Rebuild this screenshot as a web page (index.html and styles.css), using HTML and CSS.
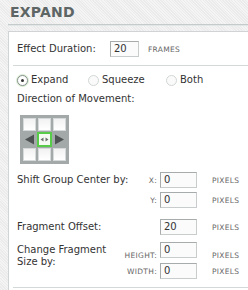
FILE: index.html
```html
<!DOCTYPE html>
<html>
<head>
<meta charset="utf-8">
<link rel="stylesheet" href="styles.css">
</head>
<body>
<div class="page">
  <h1 class="title">EXPAND</h1>
  <div class="panel">
    <div class="row duration">
      <span class="label w-dur">Effect Duration:</span>
      <span class="field f-short">20</span>
      <span class="unit">FRAMES</span>
    </div>
    <div class="sep"></div>
    <div class="radios">
      <label class="radio r-expand"><span class="dot checked"></span>Expand</label>
      <label class="radio r-squeeze"><span class="dot"></span>Squeeze</label>
      <label class="radio"><span class="dot"></span>Both</label>
    </div>
    <div class="label dir-label">Direction of Movement:</div>
    <div class="dir-grid">
      <span class="cell"></span><span class="cell"></span><span class="cell"></span>
      <span class="cell arrow"><svg width="13" height="13" viewBox="0 0 13 13"><path d="M2 6.5 L11 1.5 L11 11.5 Z" fill="#4e5252"/></svg></span>
      <span class="cell center"><svg width="11" height="11" viewBox="0 0 11 11"><path d="M1.5 5.5 L4.5 3.5 L4.5 7.5 Z M9.5 5.5 L6.5 3.5 L6.5 7.5 Z" fill="#6a6e6e"/></svg></span>
      <span class="cell arrow"><svg width="13" height="13" viewBox="0 0 13 13"><path d="M11 6.5 L2 1.5 L2 11.5 Z" fill="#4e5252"/></svg></span>
      <span class="cell"></span><span class="cell"></span><span class="cell"></span>
    </div>
    <div class="params">
      <div class="prow r-x">
        <span class="label">Shift Group Center by:</span>
        <span class="sub">X:</span>
        <span class="field f-long">0</span>
        <span class="unit">PIXELS</span>
      </div>
      <div class="prow r-y">
        <span class="label"></span>
        <span class="sub">Y:</span>
        <span class="field f-long">0</span>
        <span class="unit">PIXELS</span>
      </div>
      <div class="prow r-frag">
        <span class="label">Fragment Offset:</span>
        <span class="sub"></span>
        <span class="field f-long">20</span>
        <span class="unit">PIXELS</span>
      </div>
      <div class="prow r-h">
        <span class="label two-line">Change Fragment<br>Size by:</span>
        <span class="sub">HEIGHT:</span>
        <span class="field f-long">0</span>
        <span class="unit">PIXELS</span>
      </div>
      <div class="prow r-w">
        <span class="label"></span>
        <span class="sub">WIDTH:</span>
        <span class="field f-long">0</span>
        <span class="unit">PIXELS</span>
      </div>
    </div>
    <div class="sep bottom"></div>
  </div>
</div>
</body>
</html>
```
FILE: styles.css
```css
html, body {
  margin: 0;
  padding: 0;
}
body {
  width: 248px;
  height: 290px;
  overflow: hidden;
  background-color: #f0f0f0;
  background-image: repeating-linear-gradient(45deg, #ebebeb 0 1px, #f4f4f4 1px 2px);
  font-family: "DejaVu Sans", Verdana, sans-serif;
  color: #333;
}
.page {
  padding-left: 8px;
}
.title {
  margin: 0;
  padding: 5px 0 0 2px;
  height: 19px;
  font-size: 14px;
  font-weight: bold;
  color: #5d6565;
  letter-spacing: 0.2px;
  line-height: 15px;
  border-bottom: 1px solid #c5cbcb;
  box-shadow: 0 1px 0 #e2e6e6;
}
.panel {
  margin-top: 6px;
  background: #fff;
  border-top: 1px solid #d0d4d4;
  border-left: 1px solid #d0d4d4;
  padding: 9px 0 4px 8px;
}
.label {
  font-size: 10px;
  line-height: 12px;
  color: #333;
  white-space: nowrap;
}
.row {
  display: flex;
  align-items: center;
}
.w-dur {
  width: 93px;
}
.field {
  box-sizing: border-box;
  height: 16px;
  border: 1px solid #a7abab;
  border-right-color: #c9cccc;
  border-bottom-color: #c9cccc;
  background: #fbfbfb;
  font-size: 10px;
  line-height: 14px;
  padding-left: 3px;
  color: #333;
}
.f-short {
  width: 29px;
}
.f-long {
  width: 37px;
}
.unit {
  font-size: 7.5px;
  color: #666;
  letter-spacing: 0.3px;
}
.duration .unit {
  margin-left: 9px;
}
.sep {
  height: 1px;
  background: #d3d8d8;
  margin: 8px 0 0 -4px;
}
.radios {
  display: flex;
  align-items: center;
  margin-top: 8px;
  font-size: 10px;
  line-height: 12px;
  color: #333;
}
.radio {
  display: flex;
  align-items: center;
}
.r-expand { width: 71px; }
.r-squeeze { width: 78px; }
.dot {
  box-sizing: border-box;
  width: 11px;
  height: 11px;
  border-radius: 50%;
  border: 1px solid #d3d6d6;
  background: #fafafa;
  margin-right: 3px;
  position: relative;
}
.dot.checked {
  border-color: #8a9090;
  box-shadow: 0 0 0 1px #d8ecd2;
  background: #fff;
}
.dot.checked::after {
  content: "";
  position: absolute;
  left: 3px;
  top: 3px;
  width: 3px;
  height: 3px;
  border-radius: 50%;
  background: #333;
}
.dir-label {
  margin-top: 7px;
}
.dir-grid {
  display: grid;
  grid-template-columns: repeat(3, 13px);
  grid-auto-rows: 13px;
  gap: 2px;
  padding: 3px;
  width: fit-content;
  margin: 10px 0 0 3px;
  background: #a3a8a8;
}
.cell {
  box-sizing: border-box;
  background: linear-gradient(#f2f2f2, #ffffff);
  border: 1px solid #d7dada;
}
.cell.arrow {
  background: transparent;
  border: none;
}
.cell.arrow svg {
  display: block;
}
.cell.center {
  margin: -1px;
  border: 2px solid #56cc48;
  background: #f5fbf3;
  display: flex;
  align-items: center;
  justify-content: center;
}
.params {
  margin-top: 8px;
}
.prow {
  display: grid;
  grid-template-columns: 100px 43px 37px auto;
  align-items: center;
  height: 16px;
}
.prow .sub {
  font-size: 7.5px;
  color: #666;
  text-align: right;
  padding-right: 3px;
  letter-spacing: 0.3px;
}
.prow .unit {
  padding-left: 15px;
}
.r-y { margin-top: 4px; }
.r-frag { margin-top: 11px; }
.r-h { margin-top: 7px; align-items: start; }
.r-h .sub, .r-h .unit { align-self: center; }
.r-w { margin-top: 5px; }
.two-line {
  line-height: 12px;
  margin-top: 2px;
}
.sep.bottom {
  margin-top: 8px;
}
```
